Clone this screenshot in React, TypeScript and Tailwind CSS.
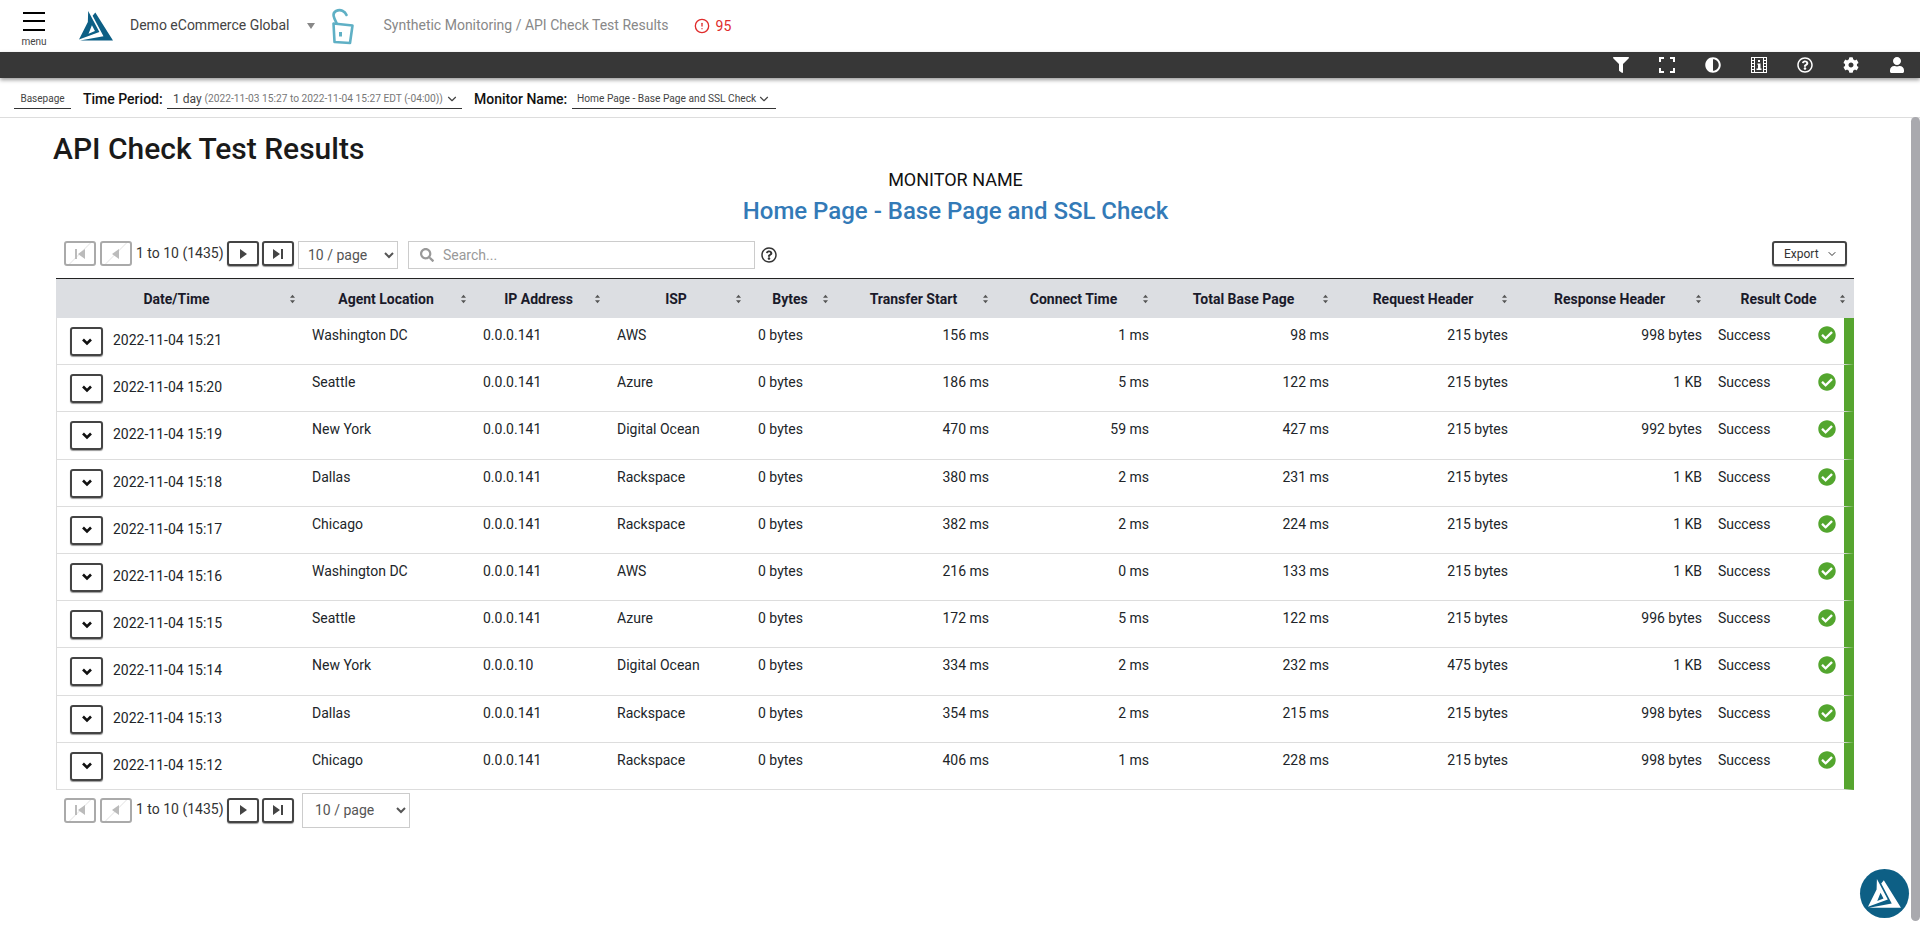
import { ChevronDown, CircleAlert } from 'lucide-react'
import {
  FaAdjust,
  FaCheckCircle,
  FaCog,
  FaFilter,
  FaRegQuestionCircle,
  FaSearch,
  FaUser,
} from 'react-icons/fa'

const rows = [
  ['15:21', 'Washington DC', '0.0.0.141', 'AWS', '156 ms', '1 ms', '98 ms', '215 bytes', '998 bytes'],
  ['15:20', 'Seattle', '0.0.0.141', 'Azure', '186 ms', '5 ms', '122 ms', '215 bytes', '1 KB'],
  ['15:19', 'New York', '0.0.0.141', 'Digital Ocean', '470 ms', '59 ms', '427 ms', '215 bytes', '992 bytes'],
  ['15:18', 'Dallas', '0.0.0.141', 'Rackspace', '380 ms', '2 ms', '231 ms', '215 bytes', '1 KB'],
  ['15:17', 'Chicago', '0.0.0.141', 'Rackspace', '382 ms', '2 ms', '224 ms', '215 bytes', '1 KB'],
  ['15:16', 'Washington DC', '0.0.0.141', 'AWS', '216 ms', '0 ms', '133 ms', '215 bytes', '1 KB'],
  ['15:15', 'Seattle', '0.0.0.141', 'Azure', '172 ms', '5 ms', '122 ms', '215 bytes', '996 bytes'],
  ['15:14', 'New York', '0.0.0.10', 'Digital Ocean', '334 ms', '2 ms', '232 ms', '475 bytes', '1 KB'],
  ['15:13', 'Dallas', '0.0.0.141', 'Rackspace', '354 ms', '2 ms', '215 ms', '215 bytes', '998 bytes'],
  ['15:12', 'Chicago', '0.0.0.141', 'Rackspace', '406 ms', '1 ms', '228 ms', '215 bytes', '998 bytes'],
]

const columns = [
  'Date/Time',
  'Agent Location',
  'IP Address',
  'ISP',
  'Bytes',
  'Transfer Start',
  'Connect Time',
  'Total Base Page',
  'Request Header',
  'Response Header',
  'Result Code',
]

function Logo({ className, fill }: { className: string; fill: string }) {
  return (
    <svg viewBox="0 0 100 88" className={className} fill={fill}>
      <path d="M48 4 L100 87 L3 87 L72 74 L40 14 Z" />
      <path fillRule="evenodd" d="M27 0 L60 62 L0 84 L26 32 Z M38 42 L47 59 L28 67 Z" />
    </svg>
  )
}

function SortArrows() {
  return (
    <svg viewBox="0 0 7 12" className="w-[7px] h-[10px] flex-shrink-0" fill="#555">
      <path d="M3.5 1 L6.5 4.5 L0.5 4.5 Z M3.5 11 L6.5 7.5 L0.5 7.5 Z" />
    </svg>
  )
}

function PagerButton({ kind, disabled }: { kind: 'first' | 'prev' | 'next' | 'last'; disabled?: boolean }) {
  const paths = {
    first: 'M2 2 H4 V12 H2 Z M12 2 V12 L5 7 Z',
    prev: 'M10 2 V12 L3 7 Z',
    next: 'M4 2 V12 L11 7 Z',
    last: 'M2 2 V12 L9 7 Z M10 2 H12 V12 H10 Z',
  }
  return (
    <button
      className={
        disabled
          ? 'w-[32px] h-[25px] flex items-center justify-center rounded-[3px] border-2 border-[#aaaaaa] bg-[linear-gradient(135deg,#ffffff_47%,#e8e8e8_50%,#ffffff_53%)]'
          : 'w-[32px] h-[25px] flex items-center justify-center rounded-[3px] border-2 border-[#444444] bg-white shadow-[0_1px_1px_#999999]'
      }
    >
      <svg viewBox="0 0 14 14" className="w-[14px] h-[14px]" fill={disabled ? '#bbbbbb' : '#444444'}>
        <path d={paths[kind]} />
      </svg>
    </button>
  )
}

function Pager() {
  return (
    <div className="flex items-center">
      <PagerButton kind="first" disabled />
      <div className="ml-[4px]">
        <PagerButton kind="prev" disabled />
      </div>
      <span className="ml-[4px] w-[91px] text-sm text-[#333333] -mt-[2px] whitespace-nowrap">1 to 10 (1435)</span>
      <PagerButton kind="next" />
      <div className="ml-[3px]">
        <PagerButton kind="last" />
      </div>
    </div>
  )
}

function FrameIcon() {
  return (
    <svg viewBox="0 0 16 16" className="w-4 h-4" fill="none" stroke="white" strokeWidth="2">
      <path d="M1 5 V1 H5 M11 1 H15 V5 M15 11 V15 H11 M5 15 H1 V11" />
    </svg>
  )
}

function FilmInfoIcon() {
  return (
    <svg viewBox="0 0 16 16" className="w-4 h-4" fill="white">
      <path
        fillRule="evenodd"
        d="M0 0 H16 V16 H0 Z M1 1 V3 H3 V1 Z M1 4 V6 H3 V4 Z M1 7 V9 H3 V7 Z M1 10 V12 H3 V10 Z M1 13 V15 H3 V13 Z M13 1 V3 H15 V1 Z M13 4 V6 H15 V4 Z M13 7 V9 H15 V7 Z M13 10 V12 H15 V10 Z M13 13 V15 H15 V13 Z M4 1 V15 H12 V1 Z"
      />
      <path d="M7 3 H9 V5 H7 Z M6.5 6.5 H9.5 V11.5 H10.5 V13 H5.5 V11.5 H7 V8 H6.5 Z" />
    </svg>
  )
}

export default function App() {
  return (
    <div className="relative h-screen overflow-hidden bg-white [font-family:Roboto,sans-serif] text-[#212529]">
      {/* Top header */}
      <header className="h-[52px] flex items-center">
        <div className="ml-[19px] w-[30px] flex flex-col items-center self-start mt-[12px]">
          <div className="w-[22px] h-[2px] bg-black" />
          <div className="w-[22px] h-[2px] bg-black mt-[6px]" />
          <div className="w-[22px] h-[2px] bg-black mt-[7px]" />
          <span className="text-[10px] leading-[12px] mt-[5px] text-[#444444]">menu</span>
        </div>
        <Logo className="ml-[30px] w-[34px] h-[30px] flex-shrink-0" fill="#0d5f85" />
        <span className="ml-[17px] text-sm text-[#444444] -mt-[2px]">Demo eCommerce Global</span>
        <svg viewBox="0 0 8 6" className="ml-[17px] w-[8px] h-[6px]" fill="#888888">
          <path d="M0 0 H8 L4 6 Z" />
        </svg>
        <svg viewBox="0 0 50 52" className="ml-[4px] w-[50px] h-[52px] flex-shrink-0" fill="none" stroke="#5fb0c5" strokeWidth="2.6" strokeLinejoin="round" strokeLinecap="round">
          <path d="M14.5 23.5 L33.5 25.5 L31 43 L15.5 42 Z" />
          <path d="M17.5 23 C15 18 12.5 13.5 17 11 C21.5 8.8 26 11 27.5 15" />
          <path d="M21.5 32 V36.5" strokeWidth="3" strokeLinecap="butt" />
        </svg>
        <span className="ml-[15px] text-sm text-[#888888] -mt-[2px]">Synthetic Monitoring / API Check Test Results</span>
        <CircleAlert className="ml-[25px] w-4 h-4 text-[#e02b2b]" strokeWidth={2} />
        <span className="ml-[6px] text-sm text-[#e02b2b]">95</span>
      </header>

      {/* Toolbar */}
      <div className="h-[26px] bg-[#373737] shadow-[0_2px_4px_rgba(0,0,0,0.4)] flex items-center justify-end gap-[30px] pr-[15px]">
        <FaFilter className="w-4 h-4 text-white" />
        <FrameIcon />
        <FaAdjust className="w-4 h-4 text-white" />
        <FilmInfoIcon />
        <FaRegQuestionCircle className="w-4 h-4 text-white" />
        <FaCog className="w-4 h-4 text-white" />
        <FaUser className="w-4 h-4 text-white" />
      </div>

      {/* Filters */}
      <div className="h-[40px] border-b border-[#dddddd] flex items-start pt-[12px]">
        <div className="ml-[14px] w-[57px] h-[19px] border-b border-[#333333] text-[10px] leading-[18px] text-center text-[#444444]">Basepage</div>
        <span className="ml-[12px] w-[84px] text-sm leading-[18px] font-medium text-[#111111]">Time Period:</span>
        <div className="w-[295px] h-[19px] border-b border-[#333333] flex items-center pl-[6px] text-[#444444] whitespace-nowrap">
          <span className="text-xs">1 day</span>
          <span className="ml-[3px] text-[10.2px] text-[#777777]">(2022-11-03 15:27 to 2022-11-04 15:27 EDT (-04:00))</span>
          <ChevronDown className="ml-[2px] w-[14px] h-[14px] flex-shrink-0" />
        </div>
        <span className="ml-[12px] w-[98px] text-sm leading-[18px] font-medium text-[#111111]">Monitor Name:</span>
        <div className="w-[204px] h-[19px] border-b border-[#333333] flex items-center pl-[5px] text-[#444444] whitespace-nowrap">
          <span className="text-[10.2px]">Home Page - Base Page and SSL Check</span>
          <ChevronDown className="ml-[1px] w-[14px] h-[14px] flex-shrink-0" />
        </div>
      </div>

      {/* Page content */}
      <main>
        <h1 className="ml-[53px] mt-[11px] text-[30px] leading-[39px] font-medium text-[#1a1a1a]">API Check Test Results</h1>
        <div className="w-[1911px] text-center text-[#111111] text-[18px] leading-[24px]">MONITOR NAME</div>
        <div className="w-[1911px] text-center text-[24px] leading-[32px] mt-[3px] font-medium text-[#337ab7]">Home Page - Base Page and SSL Check</div>

        <div className="mt-[14px] ml-[64px] w-[1783px] flex items-start">
          <Pager />
          <select className="ml-[4px] w-[100px] h-[28px] bg-white border border-[#cccccc] text-sm text-[#555555] pl-[5px]">
            <option>10 / page</option>
          </select>
          <div className="ml-[10px] w-[347px] h-[28px] border border-[#cccccc] flex items-center">
            <FaSearch className="ml-[11px] w-[14px] h-[14px] text-[#999999]" />
            <span className="ml-[9px] text-sm text-[#999999]">Search...</span>
          </div>
          <FaRegQuestionCircle className="ml-[6px] mt-[6px] w-4 h-4 text-[#333333]" />
          <button className="ml-auto w-[75px] h-[25px] border-2 border-[#444444] rounded-[3px] flex items-center pl-[10px] gap-[7px] text-xs text-[#333333] shadow-[0_1px_1px_#999999]">
            Export
            <ChevronDown className="w-[12px] h-[12px]" />
          </button>
        </div>

        <table className="ml-[56px] mt-[9px] w-[1798px] table-fixed border-separate border-spacing-0 text-sm">
          <colgroup>
            <col className="w-[248px]" />
            <col className="w-[171px]" />
            <col className="w-[134px]" />
            <col className="w-[141px]" />
            <col className="w-[87px]" />
            <col className="w-[160px]" />
            <col className="w-[160px]" />
            <col className="w-[180px]" />
            <col className="w-[179px]" />
            <col className="w-[194px]" />
            <col className="w-[144px]" />
          </colgroup>
          <thead>
            <tr>
              {columns.map((col) => (
                <th key={col} className="h-[40px] px-2 bg-[#dcdee2] border-t border-[#222222] font-bold text-[#1a1a2a]">
                  <div className="flex items-center">
                    <span className="flex-1 text-center">{col}</span>
                    <SortArrows />
                  </div>
                </th>
              ))}
            </tr>
          </thead>
          <tbody>
            {rows.map((row) => (
              <tr key={row[0]} className="h-[47.2px]">
                <td className="align-top border-b border-l border-[#dddddd] pl-[13px] pt-[9px]">
                  <div className="flex items-center">
                    <button className="w-[33px] h-[29px] border-2 border-[#444444] rounded-[3px] flex items-center justify-center shadow-[0_1px_1px_#999999]">
                      <svg viewBox="0 0 10 8" className="w-[10px] h-[8px]" fill="none" stroke="#111111" strokeWidth="2.6">
                        <path d="M1 1.5 L5 5.5 L9 1.5" />
                      </svg>
                    </button>
                    <span className="ml-[10px] -mt-[3px]">2022-11-04 {row[0]}</span>
                  </div>
                </td>
                <td className="align-top border-b border-[#dddddd] px-2 pt-[7px]">{row[1]}</td>
                <td className="align-top border-b border-[#dddddd] px-2 pt-[7px]">{row[2]}</td>
                <td className="align-top border-b border-[#dddddd] px-2 pt-[7px]">{row[3]}</td>
                <td className="align-top border-b border-[#dddddd] px-2 pt-[7px]">0 bytes</td>
                <td className="align-top border-b border-[#dddddd] px-2 pt-[7px] text-right">{row[4]}</td>
                <td className="align-top border-b border-[#dddddd] px-2 pt-[7px] text-right">{row[5]}</td>
                <td className="align-top border-b border-[#dddddd] px-2 pt-[7px] text-right">{row[6]}</td>
                <td className="align-top border-b border-[#dddddd] px-2 pt-[7px] text-right">{row[7]}</td>
                <td className="align-top border-b border-[#dddddd] px-2 pt-[7px] text-right">{row[8]}</td>
                <td className="align-top border-b border-b-[#dddddd] border-r-[10px] border-r-[#56a52f] px-2 pt-[7px]">
                  <div className="flex items-center justify-between">
                    <span>Success</span>
                    <FaCheckCircle className="w-[18px] h-[18px] text-[#53a62e]" />
                  </div>
                </td>
              </tr>
            ))}
          </tbody>
        </table>

        <div className="mt-[3px] ml-[64px] flex items-start">
          <div className="mt-[5px]">
            <Pager />
          </div>
          <select className="ml-[8px] w-[108px] h-[35px] bg-white border border-[#cccccc] text-sm text-[#555555] pl-[8px]">
            <option>10 / page</option>
          </select>
        </div>
      </main>

      {/* Scrollbar thumb */}
      <div className="absolute right-0 top-[117px] w-[9px] h-[804px] rounded-full bg-[#a9a9ae]" />

      {/* Floating logo button */}
      <div className="absolute left-[1860px] top-[869px] w-[49px] h-[49px] rounded-full bg-[#0d5f85] flex items-center justify-center">
        <Logo className="w-[33px] h-[29px]" fill="white" />
      </div>
    </div>
  )
}
